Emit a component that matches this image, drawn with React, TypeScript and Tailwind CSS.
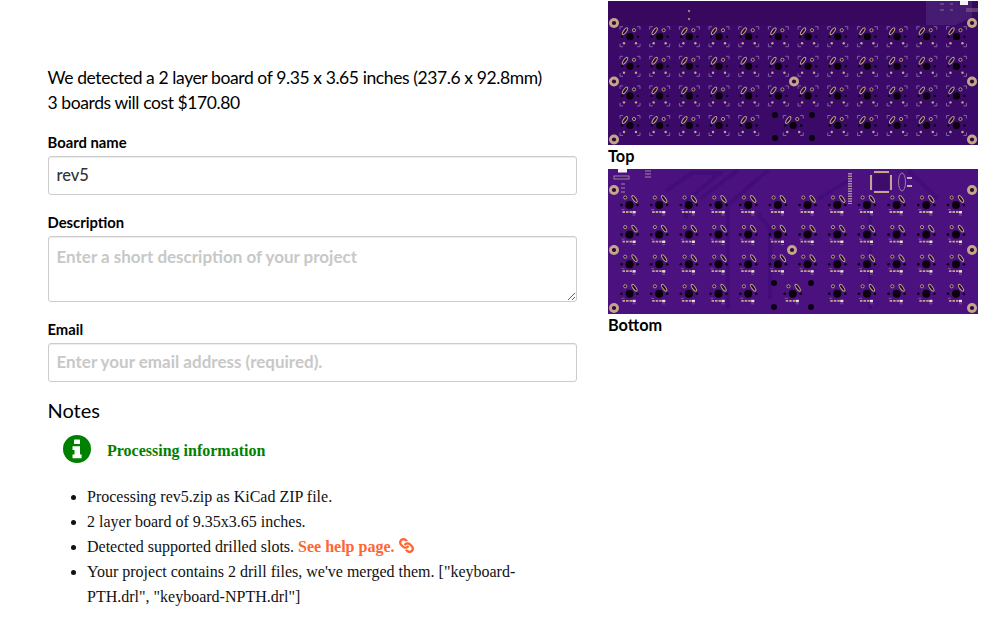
import { FaLink } from "react-icons/fa";

const sans = "font-['Lato','Noto_Sans',sans-serif]";

const colX = (i: number) => i * 29.68;

// key positions are relative to the first key of the board
const keys = [0, 1, 2, 3].flatMap((row) =>
  row < 3
    ? Array.from({ length: 12 }, (_, c) => [colX(c), row * 29.6])
    : [0, 1, 2, 3, 4, 5.5, 7, 8, 9, 10, 11].map((c) => [colX(c), row * 29.6]),
);

const tan = "#c4a58a";

function Mount({ x, y, r = 5 }: { x: number; y: number; r?: number }) {
  return (
    <g>
      <circle cx={x} cy={y} r={r} fill={tan} />
      <circle cx={x} cy={y} r={r * 0.42} fill="#2a0a3a" />
    </g>
  );
}

function Bracket({ x, y, sx, sy }: { x: number; y: number; sx: number; sy: number }) {
  return (
    <path
      d={`M${x} ${y + 3 * sy}V${y}H${x + 3 * sx}`}
      fill="none"
      stroke="#8d68ad"
      strokeWidth="0.9"
    />
  );
}

function TopBoard() {
  return (
    <svg viewBox="0 0 370 144" className="block w-[370px] h-[144px]">
      <defs>
        <filter id="soft-top">
          <feGaussianBlur stdDeviation="0.4" />
        </filter>
      </defs>
      <rect width="370" height="144" fill="#3b0a69" />
      <rect width="370" height="24" fill="#38085f" />
      <g filter="url(#soft-top)">
        <path d="M318 0H364V16L348 24H318Z" fill="#451a72" />
        <rect x="352" y="0" width="8" height="4" fill="#f4f0f6" />
        <path d="M332 3h4M332 9h4M342 3h3M342 9h3M358 8h12M358 10h12" stroke="#8a6f8a" strokeWidth="1" />
        <circle cx="81" cy="10" r="1.2" fill="#9c8070" />
        <circle cx="81" cy="18" r="1.2" fill="#9c8070" />
        {keys.map(([dx, dy], i) => (
          <g key={i} transform={`translate(${22 + dx} ${35.7 + dy})`}>
            <ellipse cx="-5" cy="-5.5" rx="1.5" ry="4" transform="rotate(35 -5 -5.5)" fill="#1c0a2a" stroke={tan} strokeWidth="1" />
            <circle cx="4" cy="-6.5" r="1.6" fill="#1c0a2a" stroke={tan} strokeWidth="0.9" />
            <circle cx="0" cy="0" r="3.6" fill="#08030c" />
            <circle cx="-8" cy="0" r="1.2" fill="#08030c" />
            <circle cx="8" cy="0" r="1.2" fill="#08030c" />
            <circle cx="-6" cy="6.5" r="1.2" fill={tan} />
            <circle cx="6" cy="6.5" r="1.2" fill={tan} />
            <Bracket x={-10} y={-10} sx={1} sy={1} />
            <Bracket x={10} y={-10} sx={-1} sy={1} />
            <Bracket x={-10} y={10} sx={1} sy={-1} />
            <Bracket x={10} y={10} sx={-1} sy={-1} />
          </g>
        ))}
        {[[167, 114], [167, 137], [204, 114], [204, 137]].map(([x, y]) => (
          <circle key={`${x}-${y}`} cx={x} cy={y} r="3" fill="#08030c" />
        ))}
        {[[6, 22], [6, 80.5], [6, 138.5], [186, 80.5], [364, 22], [364, 80.5], [364, 138.5]].map(([x, y]) => (
          <Mount key={`${x}-${y}`} x={x} y={y} />
        ))}
      </g>
    </svg>
  );
}

function BottomBoard() {
  return (
    <svg viewBox="0 0 370 145" className="block w-[370px] h-[145px]">
      <defs>
        <filter id="soft-bottom">
          <feGaussianBlur stdDeviation="0.45" />
        </filter>
      </defs>
      <rect width="370" height="145" fill="#4a117f" />
      <g filter="url(#soft-bottom)">
        <path d="M58 22L84 4H112L78 32V50M92 30L130 1M120 140V36L160 1M210 30L240 12M300 1L330 30M162 60V130M150 45L175 75M262 40V140" fill="none" stroke="#42107a" strokeWidth="4" />
        <rect x="10" y="0" width="9" height="3.5" fill="#f6f2f8" />
        <rect x="6" y="7" width="15" height="3" fill="none" stroke="#a58aa0" strokeWidth="0.9" />
        <path d="M37 2h6M37 5h6M37 8h6M13 15h4M13 19h4M13 23h4" stroke="#a58aa0" strokeWidth="1.2" />
        <path d="M242 4v31" stroke="#a58aa0" strokeWidth="4" strokeDasharray="1.5 1" />
        <rect x="265" y="5" width="16" height="16" rx="1" fill="#3c0b6c" />
        <path d="M266 3h15M266 23h15M263 6v15M283 6v15" stroke={tan} strokeWidth="2" />
        <ellipse cx="294" cy="13" rx="3.5" ry="9" fill="none" stroke="#a58aa0" strokeWidth="0.9" />
        <path d="M299 9h5M299 17h5" stroke="#c4b0b0" strokeWidth="2" />
        {keys.map(([dx, dy], i) => (
          <g key={i} transform={`translate(${21.5 + dx} ${36 + dy})`}>
            <ellipse cx="5" cy="-6" rx="1.5" ry="4" transform="rotate(-35 5 -6)" fill="#1c0a2a" stroke={tan} strokeWidth="1" />
            <circle cx="-4.3" cy="-7.5" r="1.6" fill="#1c0a2a" stroke={tan} strokeWidth="0.9" />
            <circle cx="0" cy="0" r="4" fill="#08030c" />
            <circle cx="-8" cy="0" r="1.3" fill="#08030c" />
            <circle cx="8" cy="0" r="1.3" fill="#08030c" />
            <path d="M-7 7h14" stroke={tan} strokeWidth="1.8" strokeDasharray="2.5 1" />
            <rect x="3" y="6" width="3" height="2.4" fill="#e6dcd0" />
            <path d="M-8 4.5h3M3 10h3" stroke="#8f6fb0" strokeWidth="0.7" />
          </g>
        ))}
        {[[166, 114], [166, 138], [203, 114], [203, 138]].map(([x, y]) => (
          <circle key={`${x}-${y}`} cx={x} cy={y} r="3" fill="#08030c" />
        ))}
        {[[6, 21], [6, 81], [6, 139], [184, 81], [364, 21], [364, 81], [364, 139]].map(([x, y]) => (
          <Mount key={`${x}-${y}`} x={x} y={y} />
        ))}
      </g>
    </svg>
  );
}

function InfoIcon() {
  return (
    <svg viewBox="0 0 28 28" className="w-[28px] h-[28px] shrink-0">
      <circle cx="14" cy="14" r="14" fill="#008000" />
      <rect x="11" y="4.5" width="6" height="4.5" rx="0.6" fill="#fff" />
      <path d="M9.5 11.2h7.5v8.3h1.6v3.8H9.5v-3.8h2V15H9.5z" fill="#fff" />
    </svg>
  );
}

const fieldClass = `block w-full border border-[#ccc] rounded-[3px] shadow-[inset_0_1px_1px_rgba(0,0,0,0.075)] px-2 text-[16.5px] font-medium text-[#333] placeholder:text-[#c8c8c8] placeholder:font-bold placeholder:text-[17px] outline-none ${sans}`;

const labelClass = `block mb-[4px] text-[14.8px] leading-[20px] font-bold ${sans}`;

export default function App() {
  return (
    <div className="flex items-start bg-white h-[625px] overflow-hidden pl-[47.5px] pt-px text-black">
      <div className="w-[529.5px] pt-[64px]">
        <p className={`text-[17.5px] tracking-[-0.4px] leading-[25px] whitespace-nowrap ${sans}`}>
          We detected a 2 layer board of 9.35 x 3.65 inches (237.6 x 92.8mm)
          <br />3 boards will cost $170.80
        </p>

        <label className={`${labelClass} mt-[17px]`}>Board name</label>
        <input className={`${fieldClass} h-[39px] pb-[2px]`} defaultValue="rev5" />

        <label className={`${labelClass} mt-[17px]`}>Description</label>
        <textarea
          className={`${fieldClass} h-[66px] pt-[7px]`}
          placeholder="Enter a short description of your project"
        />

        <label className={`${labelClass} mt-[17px]`}>Email</label>
        <input className={`${fieldClass} h-[39px] pb-[2px]`} placeholder="Enter your email address (required)." />

        <h3 className={`mt-[16px] text-[20px] leading-[24px] ${sans}`}>Notes</h3>

        <div className="flex items-center mt-[13px] ml-[15.5px] font-['Liberation_Serif',serif]">
          <InfoIcon />
          <span className="ml-[16px] mt-[4px] text-[16px] font-bold text-[#008000]">Processing information</span>
        </div>

        <ul className="list-disc mt-[21px] pl-[39.5px] w-[500px] font-['Liberation_Serif',serif] text-[16px] leading-[25px] text-[#111]">
          <li>Processing rev5.zip as KiCad ZIP file.</li>
          <li>2 layer board of 9.35x3.65 inches.</li>
          <li>
            Detected supported drilled slots.{" "}
            <a className="font-bold text-[#ff6633]">See help page.</a>{" "}
            <FaLink className="inline-block w-[15px] h-[15px] text-[#ff6633] align-[-1px] rotate-90" />
          </li>
          <li>
            Your project contains 2 drill files, we've merged them. ["keyboard-PTH.drl", "keyboard-NPTH.drl"]
          </li>
        </ul>
      </div>

      <div className="ml-[31px] w-[370px]">
        <TopBoard />
        <div className={`h-[24px] text-[16.3px] leading-[21px] font-bold ${sans}`}>Top</div>
        <BottomBoard />
        <div className={`text-[16.3px] leading-[21px] font-bold ${sans}`}>Bottom</div>
      </div>
    </div>
  );
}
